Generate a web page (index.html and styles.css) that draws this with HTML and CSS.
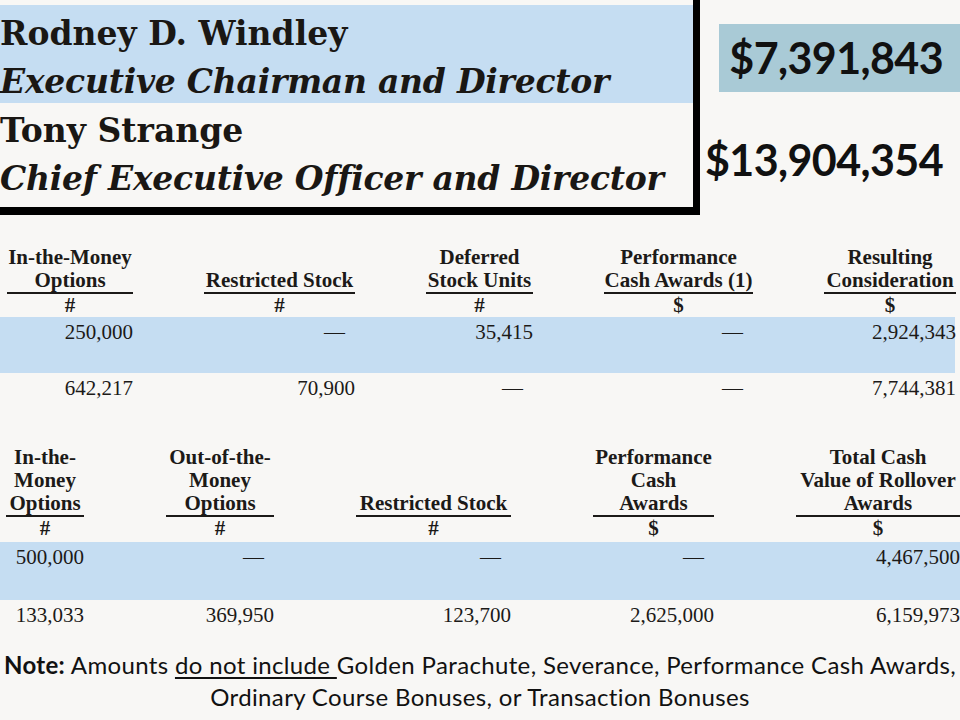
FILE: index.html
```html
<!DOCTYPE html>
<html lang="en">
<head>
<meta charset="utf-8">
<title>Rollover Awards</title>
<link rel="stylesheet" href="styles.css">
</head>
<body>
<div class="page">
  <header class="top">
    <div class="names">
      <div class="band">
        <div class="name">Rodney D. Windley</div>
        <div class="title">Executive Chairman and Director</div>
      </div>
      <div class="plain">
        <div class="name">Tony Strange</div>
        <div class="title">Chief Executive Officer and Director</div>
      </div>
    </div>
    <div class="totals">
      <div class="total total-hl">$7,391,843</div>
      <div class="total total-2">$13,904,354</div>
    </div>
  </header>

  <section class="tbl tbl1">
    <div class="row head">
      <div class="h">In-the-Money<br>Options</div>
      <div class="h">Restricted Stock</div>
      <div class="h">Deferred<br>Stock Units</div>
      <div class="h">Performance<br>Cash Awards (1)</div>
      <div class="h">Resulting<br>Consideration</div>
    </div>
    <div class="row units">
      <div>#</div><div>#</div><div>#</div><div>$</div><div>$</div>
    </div>
    <div class="row data alt">
      <div>250,000</div>
      <div class="dash">—</div>
      <div>35,415</div>
      <div class="dash">—</div>
      <div>2,924,343</div>
    </div>
    <div class="row data">
      <div>642,217</div>
      <div>70,900</div>
      <div class="dash">—</div>
      <div class="dash">—</div>
      <div>7,744,381</div>
    </div>
  </section>

  <section class="tbl tbl2">
    <div class="row head">
      <div class="h">In-the-<br>Money<br>Options</div>
      <div class="h">Out-of-the-<br>Money<br>Options</div>
      <div class="h">Restricted Stock</div>
      <div class="h">Performance<br>Cash<br>Awards</div>
      <div class="h">Total Cash<br>Value of Rollover<br>Awards</div>
    </div>
    <div class="row units">
      <div>#</div><div>#</div><div>#</div><div>$</div><div>$</div>
    </div>
    <div class="row data alt">
      <div>500,000</div>
      <div class="dash">—</div>
      <div class="dash">—</div>
      <div class="dash">—</div>
      <div>4,467,500</div>
    </div>
    <div class="row data last">
      <div>133,033</div>
      <div>369,950</div>
      <div>123,700</div>
      <div>2,625,000</div>
      <div>6,159,973</div>
    </div>
  </section>

  <p class="note"><b>Note:</b> Amounts <u>do not include </u>Golden Parachute, Severance, Performance Cash Awards,<br>Ordinary Course Bonuses, or Transaction Bonuses</p>
</div>
</body>
</html>
```

FILE: styles.css
```css
html, body {
  margin: 0;
  padding: 0;
  overflow: hidden;
  background: #f8f7f5;
}

.page {
  width: 960px;
  height: 720px;
  overflow: hidden;
}

/* top section */
.top {
  display: flex;
  height: 215px;
}

.names {
  width: 693px;
  height: 202px;
  padding-top: 5px;
  border-right: 7px solid #000;
  border-bottom: 8px solid #000;
  flex: none;
}

.band {
  background: #c5ddf2;
  height: 98px;
  padding-top: 5px;
  box-sizing: border-box;
}

.plain {
  padding-top: 4px;
}

.name,
.title {
  font-family: "DejaVu Serif", serif;
  font-size: 33px;
  line-height: 48px;
  white-space: nowrap;
  color: #1a1714;
}

.name {
  font-weight: bold;
}

.title {
  font-style: italic;
  font-weight: bold;
  letter-spacing: -0.25px;
}

.totals {
  flex: 1;
  display: flex;
  flex-direction: column;
}

.total {
  font-family: Lato, "Open Sans", sans-serif;
  font-weight: bold;
  font-size: 43px;
  line-height: 68px;
  height: 68px;
  text-align: right;
  padding-right: 17px;
  color: #111;
  letter-spacing: -0.6px;
  white-space: nowrap;
}

.total-hl {
  margin-top: 24px;
  margin-left: 19px;
  background: #a9cad6;
}

.total-2 {
  margin-top: 34px;
}

/* tables */
.tbl {
  font-family: "Liberation Serif", "Times New Roman", serif;
  font-size: 21px;
  line-height: 23px;
  color: #1c1a18;
}

.tbl1 {
  width: 955px;
  margin-top: 31px;
}

.tbl2 {
  width: 960px;
  margin-top: 17px;
}

.row {
  display: grid;
}

.tbl1 .row {
  grid-template-columns: 126px 151px 107px 149px 132px;
  column-gap: 71px;
  padding-left: 7px;
}

.tbl2 .row {
  grid-template-columns: 78px 108px 155px 121px 164px;
  column-gap: 82px;
  padding-left: 6px;
}

.head {
  align-items: end;
}

.h {
  font-weight: bold;
  text-align: center;
  white-space: nowrap;
  border-bottom: 2px solid #1c1a18;
}

.units {
  text-align: center;
  font-weight: bold;
}

.tbl2 .units {
  padding-bottom: 2px;
}

.data {
  height: 56px;
  padding-top: 4px;
  box-sizing: border-box;
  text-align: right;
}

.tbl2 .data {
  height: 58px;
}

.tbl2 .data.last {
  height: 49px;
}

.alt {
  background: #c5ddf2;
}

.dash {
  padding-right: 10px;
}

/* note */
.note {
  margin: 0;
  font-family: Lato, "Open Sans", sans-serif;
  font-size: 24px;
  line-height: 32px;
  text-align: center;
  letter-spacing: 0.35px;
  white-space: nowrap;
  color: #111;
}

.note b {
  font-weight: bold;
}

.note u {
  text-decoration-thickness: 2px;
  text-underline-offset: 3px;
}
```
